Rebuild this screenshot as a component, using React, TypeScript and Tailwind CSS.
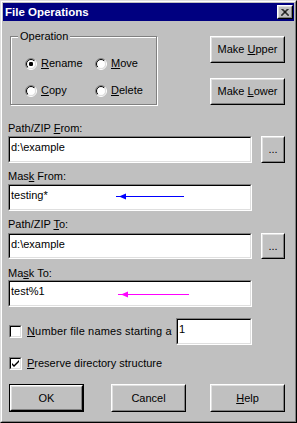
import React, { useId } from 'react';

const font = "font-['Liberation_Sans',Arial,sans-serif]";

function Btn({ children, className = '', isDefault = false }: { children: React.ReactNode; className?: string; isDefault?: boolean }) {
  return (
    <div className={`${className} ${isDefault ? 'border border-black' : ''}`}>
      <div className="h-full border border-t-white border-l-white border-r-black border-b-black">
        <div className="h-full flex items-center justify-center border border-t-[#dfdfdf] border-l-[#dfdfdf] border-r-[#808080] border-b-[#808080] text-[11px] leading-[13px] text-black">
          <span className="whitespace-pre">{children}</span>
        </div>
      </div>
    </div>
  );
}

function Field({ value, className = '', children }: { value: string; className?: string; children?: React.ReactNode }) {
  return (
    <div className={`border border-t-[#808080] border-l-[#808080] border-r-white border-b-white ${className}`}>
      <div className="relative h-full border border-t-black border-l-black border-r-[#dfdfdf] border-b-[#dfdfdf] bg-white pl-[1px] pt-[3px] text-[11px] leading-[13px] text-black">
        {value}
        {children}
      </div>
    </div>
  );
}

function Radio({ checked }: { checked?: boolean }) {
  const id = useId();
  return (
    <svg width="12" height="12" viewBox="0 0 12 12" className="shrink-0">
      <defs>
        <linearGradient id={id + 'o'} x1="0" y1="0" x2="1" y2="1">
          <stop offset="0.5" stopColor="#808080" />
          <stop offset="0.5" stopColor="#ffffff" />
        </linearGradient>
        <linearGradient id={id + 'i'} x1="0" y1="0" x2="1" y2="1">
          <stop offset="0.5" stopColor="#000000" />
          <stop offset="0.5" stopColor="#dfdfdf" />
        </linearGradient>
      </defs>
      <circle cx="6" cy="6" r="5.5" fill="none" stroke={`url(#${id}o)`} strokeWidth="1" />
      <circle cx="6" cy="6" r="4.5" fill="#fff" stroke={`url(#${id}i)`} strokeWidth="1" />
      {checked && <rect x="4" y="4" width="4" height="4" rx="1.2" fill="#000" />}
    </svg>
  );
}

function Check({ checked }: { checked?: boolean }) {
  return (
    <div className="w-[13px] h-[13px] shrink-0 border border-t-[#808080] border-l-[#808080] border-r-white border-b-white">
      <div className="h-full border border-t-black border-l-black border-r-[#dfdfdf] border-b-[#dfdfdf] bg-white">
        {checked && (
          <svg width="9" height="9" viewBox="0 0 9 9">
            <path d="M1 4 L1 6 L3 8 L8 3 L8 1 L3 6 Z" fill="#000" />
          </svg>
        )}
      </div>
    </div>
  );
}

export default function App() {
  return (
    <div className={`w-[297px] h-[423px] bg-[#c0c0c0] border border-t-[#dfdfdf] border-l-[#dfdfdf] border-r-black border-b-black ${font} text-black`}>
      <div className="h-full border border-t-white border-l-white border-r-[#808080] border-b-[#808080] p-[1px] flex flex-col">
        {/* title bar */}
        <div className="h-[18px] bg-[#000080] flex items-center pl-[2px] pr-[1px]">
          <span className="text-white font-bold text-[11.5px] leading-[14px]">File Operations</span>
          <div className="ml-auto w-[16px] h-[14px] bg-[#c0c0c0] border border-t-white border-l-white border-r-black border-b-black">
            <div className="h-full flex items-center justify-center border border-t-[#dfdfdf] border-l-[#dfdfdf] border-r-[#808080] border-b-[#808080]">
              <svg width="8" height="7" viewBox="0 0 8 7">
                <path d="M0.5 0 L7.5 7 M1.5 0 L8 6.5 M7.5 0 L0.5 7 M6.5 0 L0 6.5" stroke="#000" strokeWidth="1" />
              </svg>
            </div>
          </div>
        </div>

        <div className="pl-[5px] pr-[9px] text-[11px] leading-[13px]">
          {/* top row */}
          <div className="mt-[15px] flex">
            <div className="relative ml-[2px] w-[147px] h-[69px] border border-[#808080] shadow-[inset_1px_1px_0_#fff,1px_1px_0_#fff]">
              <span className="absolute left-[7px] top-[-7px] bg-[#c0c0c0] px-[2px]">Operation</span>
              <div className="grid grid-cols-[70px_auto] gap-y-[14px] pl-[14px] pt-[20px]">
                <div className="flex items-center gap-[4px] h-[13px]"><Radio checked /><span><u>R</u>ename</span></div>
                <div className="flex items-center gap-[4px] h-[13px]"><Radio /><span><u>M</u>ove</span></div>
                <div className="flex items-center gap-[4px] h-[13px]"><Radio /><span><u>C</u>opy</span></div>
                <div className="flex items-center gap-[4px] h-[13px]"><Radio /><span><u>D</u>elete</span></div>
              </div>
            </div>
            <div className="ml-auto flex flex-col">
              <Btn className="w-[75px] h-[27px]">Make <u>U</u>pper</Btn>
              <Btn className="w-[75px] h-[27px] mt-[15px]">Make <u>L</u>ower</Btn>
            </div>
          </div>

          <div className="mt-[17px] h-[13px]">Path/ZIP <u>F</u>rom:</div>
          <div className="mt-[1px] flex">
            <Field value="d:\example" className="w-[244px] h-[27px]" />
            <Btn className="ml-[9px] w-[24px] h-[27px]">...</Btn>
          </div>

          <div className="mt-[7px] h-[13px]">Mas<u>k</u> From:</div>
          <Field value="testing*" className="mt-[1px] w-[244px] h-[27px]">
            <svg width="68" height="7" viewBox="0 0 68 7" className="absolute left-[106px] top-[7px]">
              <rect x="0" y="3" width="68" height="1" fill="#0000ff" />
              <polygon points="3,3.5 10,0.5 10,6.5" fill="#0000ff" />
            </svg>
          </Field>

          <div className="mt-[7px] h-[13px]">Path/ZIP <u>T</u>o:</div>
          <div className="mt-[2px] flex">
            <Field value="d:\example" className="w-[244px] h-[26px]" />
            <Btn className="ml-[9px] w-[24px] h-[26px]">...</Btn>
          </div>

          <div className="mt-[8px] h-[13px]">Ma<u>s</u>k To:</div>
          <Field value="test%1" className="w-[244px] h-[27px]">
            <svg width="71" height="7" viewBox="0 0 71 7" className="absolute left-[108px] top-[9px]">
              <rect x="0" y="3" width="71" height="1" fill="#ff00ff" />
              <polygon points="3,3.5 10,0.5 10,6.5" fill="#ff00ff" />
            </svg>
          </Field>

          <div className="mt-[11px] flex items-center h-[27px]">
            <div className="ml-[1px]"><Check /></div>
            <span className="ml-[5px] w-[145px] shrink-0 overflow-hidden whitespace-nowrap tracking-[0.15px]"><u>N</u>umber file names starting at</span>
            <Field value="1" className="ml-[4px] w-[76px] h-[27px]" />
          </div>

          <div className="mt-[12px] flex items-center h-[13px]">
            <div className="ml-[1px]"><Check checked /></div>
            <span className="ml-[5px]"><u>P</u>reserve directory structure</span>
          </div>

          <div className="mt-[14px] flex">
            <Btn isDefault className="ml-[1px] w-[75px] h-[28px]">OK</Btn>
            <Btn className="ml-[27px] w-[75px] h-[28px]">Cancel</Btn>
            <Btn className="ml-auto w-[75px] h-[28px]"><u>H</u>elp</Btn>
          </div>
        </div>
      </div>
    </div>
  );
}
